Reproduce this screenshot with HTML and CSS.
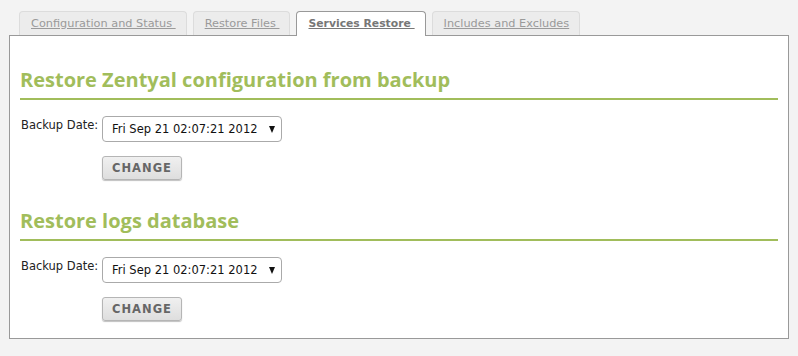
FILE: index.html
```html
<!DOCTYPE html>
<html lang="en">
<head>
    <meta charset="UTF-8">
    <title>Backup</title>
    <link rel="stylesheet" href="styles.css">
</head>
<body>
    <div class="tabs">
        <a class="tab" href="#">Configuration and Status </a>
        <a class="tab" href="#">Restore Files </a>
        <a class="tab active" href="#">Services Restore </a>
        <a class="tab" href="#">Includes and Excludes</a>
    </div>
    <div class="panel">
        <h3>Restore Zentyal configuration from backup</h3>
        <form class="restore-form">
            <div class="field">
                <label>Backup Date:</label>
                <span class="select-wrap">
                    <select>
                        <option>Fri Sep 21 02:07:21 2012</option>
                    </select>
                </span>
            </div>
            <button type="button" class="btn">CHANGE</button>
        </form>

        <h3>Restore logs database</h3>
        <form class="restore-form">
            <div class="field">
                <label>Backup Date:</label>
                <span class="select-wrap">
                    <select>
                        <option>Fri Sep 21 02:07:21 2012</option>
                    </select>
                </span>
            </div>
            <button type="button" class="btn">CHANGE</button>
        </form>
    </div>
</body>
</html>
```

FILE: styles.css
```css
body {
    margin: 0;
    padding: 11px 9px 0 9px;
    background-color: #f3f3f3;
    font-family: "DejaVu Sans", Verdana, sans-serif;
    font-size: 11.5px;
    color: #222;
}

.tabs {
    display: flex;
    gap: 6px;
    padding-left: 10px;
    height: 24px;
}
.tab {
    display: block;
    height: 23px;
    line-height: 23px;
    padding: 0 10px 0 11px;
    border: 1px solid #dcdcdc;
    border-bottom: none;
    border-radius: 4px 4px 0 0;
    background-color: #ececec;
    color: #9a9a9a;
    font-size: 11.3px;
    text-decoration: underline;
    white-space: pre;
}
.tab.active {
    position: relative;
    height: 24px;
    border-color: #999;
    background-color: #fff;
    color: #777;
    font-size: 10.8px;
    font-weight: bold;
    z-index: 1;
}

.panel {
    border: 1px solid #999;
    background-color: #fff;
    padding: 0 10px 16px 10px;
    height: 286px;
}

h3 {
    margin: 32px 0 16px 0;
    padding-bottom: 6px;
    border-bottom: 2px solid #a1bd5b;
    font-family: "Open Sans", sans-serif;
    font-size: 20px;
    line-height: 24px;
    font-weight: bold;
    color: #a1bd5b;
}
form + h3 {
    margin-top: 29px;
}

.restore-form {
    margin: 0;
    padding-left: 1px;
}
.field {
    display: flex;
    align-items: flex-start;
}
.field label {
    width: 81px;
    padding-top: 2px;
}
.select-wrap {
    position: relative;
    display: inline-block;
}
.select-wrap::after {
    content: "";
    position: absolute;
    right: 7px;
    top: 10px;
    border-left: 3.5px solid transparent;
    border-right: 3.5px solid transparent;
    border-top: 7px solid #111;
    pointer-events: none;
}
select {
    appearance: none;
    -webkit-appearance: none;
    width: 180px;
    height: 26px;
    padding: 0 0 0 9px;
    border: 1px solid #aaa;
    border-radius: 4px;
    background-color: #fff;
    font-family: "DejaVu Sans", Verdana, sans-serif;
    font-size: 11.5px;
    color: #111;
}

.btn {
    margin: 14px 0 0 81px;
    width: 80px;
    height: 24px;
    border: 1px solid #b5b5b5;
    border-radius: 3px;
    background: linear-gradient(#f0f0f0, #dedede);
    box-shadow: 0 1px 1px rgba(0, 0, 0, 0.25);
    font-family: "DejaVu Sans", Verdana, sans-serif;
    font-size: 11.5px;
    font-weight: bold;
    letter-spacing: 1px;
    color: #666;
    cursor: pointer;
}
```
